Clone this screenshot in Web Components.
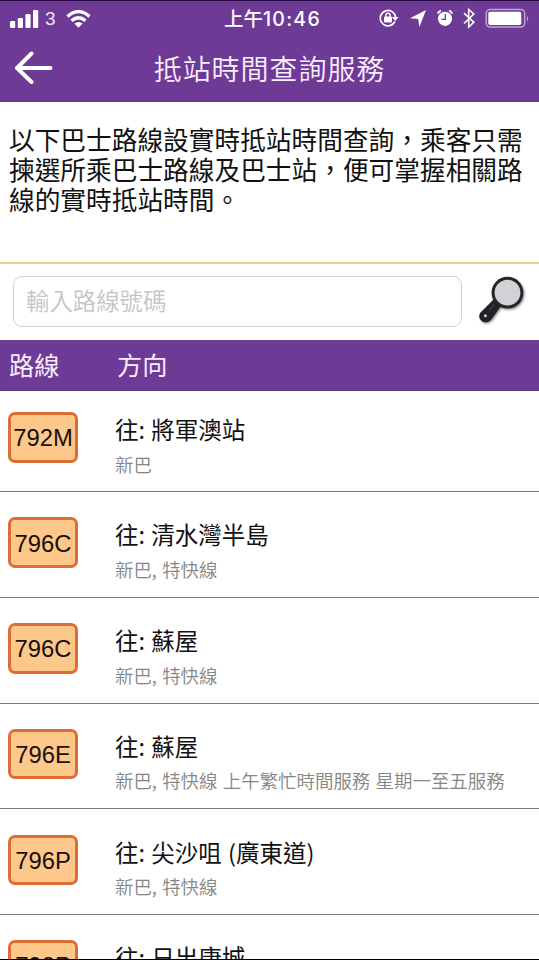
<!DOCTYPE html>
<html lang="zh-Hant">
<head>
<meta charset="utf-8">
<title>抵站時間查詢服務</title>
<style>
html,body{margin:0;height:960px;overflow:hidden;background:#fff}
body{font-family:"Noto Sans CJK TC",sans-serif}
</style>
</head>
<body>
<bus-app></bus-app>
<script>
function define(name, html) {
  const t = document.createElement('template');
  t.innerHTML = html;
  customElements.define(name, class extends HTMLElement {
    constructor() {
      super();
      this.attachShadow({mode: 'open'}).appendChild(t.content.cloneNode(true));
    }
  });
}

define('status-bar', `
<style>
:host{display:grid;grid-template-columns:224px 1fr 160px;height:37px;box-sizing:border-box;border-top:1px solid #2a0d45;color:#fff;align-items:center}
.left{display:flex;align-items:center;padding:0 0 1px 10px}
.left span{font:19px/20px "Liberation Sans",sans-serif;margin:1px 0 0 6px;color:#efe3f7}
.wifi{margin-left:10px}
.time{font:500 19.5px/24px Inter,"Noto Sans CJK TC",sans-serif;white-space:nowrap}
.time b{font-weight:500;letter-spacing:1.25px}
svg{display:block}
</style>
<div class="left">
<svg width="29" height="18" viewBox="0 0 29 18" fill="#fff"><rect x="0" y="11" width="5.2" height="7" rx="1.3"/><rect x="7.8" y="8" width="5.2" height="10" rx="1.3"/><rect x="15.4" y="4" width="5.2" height="14" rx="1.3"/><rect x="23" y="0" width="5.2" height="18" rx="1.3"/></svg>
<span>3</span>
<svg class="wifi" width="25" height="18" viewBox="0 0 25 18" fill="none" stroke="#fff" stroke-width="3.3"><path d="M1.5 6.5Q12.5-3.2 23.5 6.5"/><path d="M5.5 10.8Q12.5 4.8 19.5 10.8"/><path d="M8.4 13.5Q12.5 10.3 16.6 13.5L12.5 17.8Z" fill="#fff" stroke="none"/></svg>
</div>
<div class="time">上午<b>10:46</b></div>
<svg width="160" height="28" viewBox="379 5 160 28" fill="none" stroke="#fff">
<path d="M392.5 24.4A7.7 7.7 0 1 1 395.6 17" stroke-width="1.7"/><path d="M395 21.5A7.7 7.7 0 0 1 390 25.5" stroke-width="1.7"/><path d="M391.8 17H398.6L395.3 21Z" fill="#fff" stroke="none"/>
<path d="M385.8 17V15.4a2.2 2.2 0 0 1 4.4 0V17" stroke-width="1.4"/><rect x="384" y="16.6" width="8" height="5.8" rx="1" fill="#fff" stroke="none"/>
<path d="M426 10L419.4 27L418.2 19L410 18.3Z" fill="#fff" stroke="none"/>
<circle cx="445" cy="18.8" r="7.1" fill="#fff" stroke="none"/><path d="M437.8 13.8Q438.6 11.2 441 10.6M449 10.6Q451.4 11.2 452.2 13.8" stroke-width="1.8"/><path d="M445.3 14V19.3H441.5" stroke="#6d3b96" stroke-width="1.3"/>
<path d="M464 13.2L473.8 22.3L468.7 27V9.5L473.8 14L464 23.5" stroke-width="1.6"/>
<rect x="486.2" y="9.6" width="38.5" height="17.5" rx="4" stroke="#bda4d0" stroke-width="1.5"/><rect x="488.3" y="11.7" width="33" height="13.3" rx="1.8" fill="#fff" stroke="none"/><path d="M527 15.5Q529.4 18.3 527 21.5Z" fill="#bda4d0" stroke="none"/>
</svg>`);

define('nav-bar', `
<style>
:host{display:grid;grid-template-columns:54px 1fr 54px;align-items:center;height:65px;color:#f9edff}
h1{margin:0;text-align:center;font-size:28px;line-height:40px;font-weight:350;letter-spacing:.95px;padding-bottom:4px}
svg{display:block;margin:-5px 0 0 14px}
</style>
<svg width="40" height="34" viewBox="0 0 40 34" fill="none" stroke="#fff" stroke-width="4" stroke-linecap="round" stroke-linejoin="round"><path d="M17.5 3.5L3 18L17.5 32M3.5 18H36.5"/></svg>
<h1><slot></slot></h1>`);

define('intro-text', `
<style>
:host{display:block;box-sizing:border-box;height:161.5px;padding:22px 0 0 9px;border-bottom:2.5px solid #eacf90;color:#111;font-size:25.7px;line-height:30px;white-space:nowrap}
</style><slot></slot>`);

define('search-bar', `
<style>
:host{display:flex;height:76.5px;box-sizing:border-box;padding:12px 0 0 13px}
.box{box-sizing:border-box;width:449px;height:51.5px;border:1px solid #d2d2d4;border-radius:9px;padding-left:12px;font-size:23.4px;line-height:46px;font-weight:350;color:#c3c4c9}
svg{display:block;margin:-4px 0 0 12px}
</style>
<div class="box"><slot></slot></div>
<svg width="56" height="56" viewBox="474 272 56 56">
<defs><filter id="s" x="-20%" y="-20%" width="150%" height="150%"><feDropShadow dx="1" dy="1.3" stdDeviation="1.1" flood-opacity=".45"/></filter></defs>
<g filter="url(#s)"><path d="M493.5 299.5L501 306L492.3 318.2Q488.5 323.8 482.8 321.8Q477.6 318.5 480 313Z" fill="#202126"/>
<circle cx="507.5" cy="292.7" r="14.4" fill="#d1d2d5" stroke="#25262a" stroke-width="3"/><circle cx="485.4" cy="315.7" r="1.5" fill="#d0d0d0"/><path d="M489 310.5L494.5 304" stroke="#3c3d43" stroke-width="1.2"/></g></svg>`);

define('list-head', `
<style>
:host{display:grid;grid-template-columns:108px 1fr;box-sizing:border-box;height:51px;padding-left:9px;background:#6d3b96;border-bottom:1px solid #5d3f78;color:#faebff;font-size:25.2px;line-height:48px}
</style><slot name="route"></slot><slot name="direction"></slot>`);

define('route-badge', `
<style>
:host{display:flex;align-items:center;justify-content:center;box-sizing:border-box;width:70px;height:50.5px;padding-top:2px;border:3px solid #dd6d36;border-radius:7px;background:#fdc88a;color:#17100c;font:23.8px/28px "Liberation Sans",sans-serif;white-space:nowrap}
</style><slot></slot>`);

define('route-row', `
<style>
:host{display:grid;grid-template-columns:107px 1fr;box-sizing:border-box;height:105.7px;padding:25.3px 0 0 8px;border-bottom:1.5px solid #777;white-space:nowrap}
:host([first]){height:101.2px;padding-top:21px;border-bottom-width:1px}
.to{font-size:23.5px;line-height:34px;color:#111;word-spacing:1px}
.note{font-size:18.45px;line-height:26px;font-weight:350;color:#858585;margin-top:4.5px;word-spacing:1.2px}
</style>
<route-badge><slot name="number"></slot></route-badge>
<div><div class="to"><slot name="to"></slot></div><div class="note"><slot></slot></div></div>`);

define('bus-app', `
<style>
:host{display:block;position:relative;width:539px;height:960px;overflow:hidden;background:#fff;box-sizing:border-box;border-bottom:1px solid #000}
header{background:#6d3b96}
</style>
<header><status-bar></status-bar><nav-bar>抵站時間查詢服務</nav-bar></header>
<intro-text>以下巴士路線設實時抵站時間查詢，乘客只需<br>揀選所乘巴士路線及巴士站，便可掌握相關路<br>線的實時抵站時間。</intro-text>
<search-bar>輸入路線號碼</search-bar>
<list-head><span slot="route">路線</span><span slot="direction">方向</span></list-head>
<main>
<route-row first><span slot="number">792M</span><span slot="to">往: 將軍澳站</span>新巴</route-row>
<route-row><span slot="number">796C</span><span slot="to">往: 清水灣半島</span>新巴, 特快線</route-row>
<route-row><span slot="number">796C</span><span slot="to">往: 蘇屋</span>新巴, 特快線</route-row>
<route-row><span slot="number">796E</span><span slot="to">往: 蘇屋</span>新巴, 特快線 上午繁忙時間服務 星期一至五服務</route-row>
<route-row><span slot="number">796P</span><span slot="to">往: 尖沙咀 (廣東道)</span>新巴, 特快線</route-row>
<route-row><span slot="number">798P</span><span slot="to">往: 日出康城</span>新巴</route-row>
</main>`);
</script>
</body>
</html>
